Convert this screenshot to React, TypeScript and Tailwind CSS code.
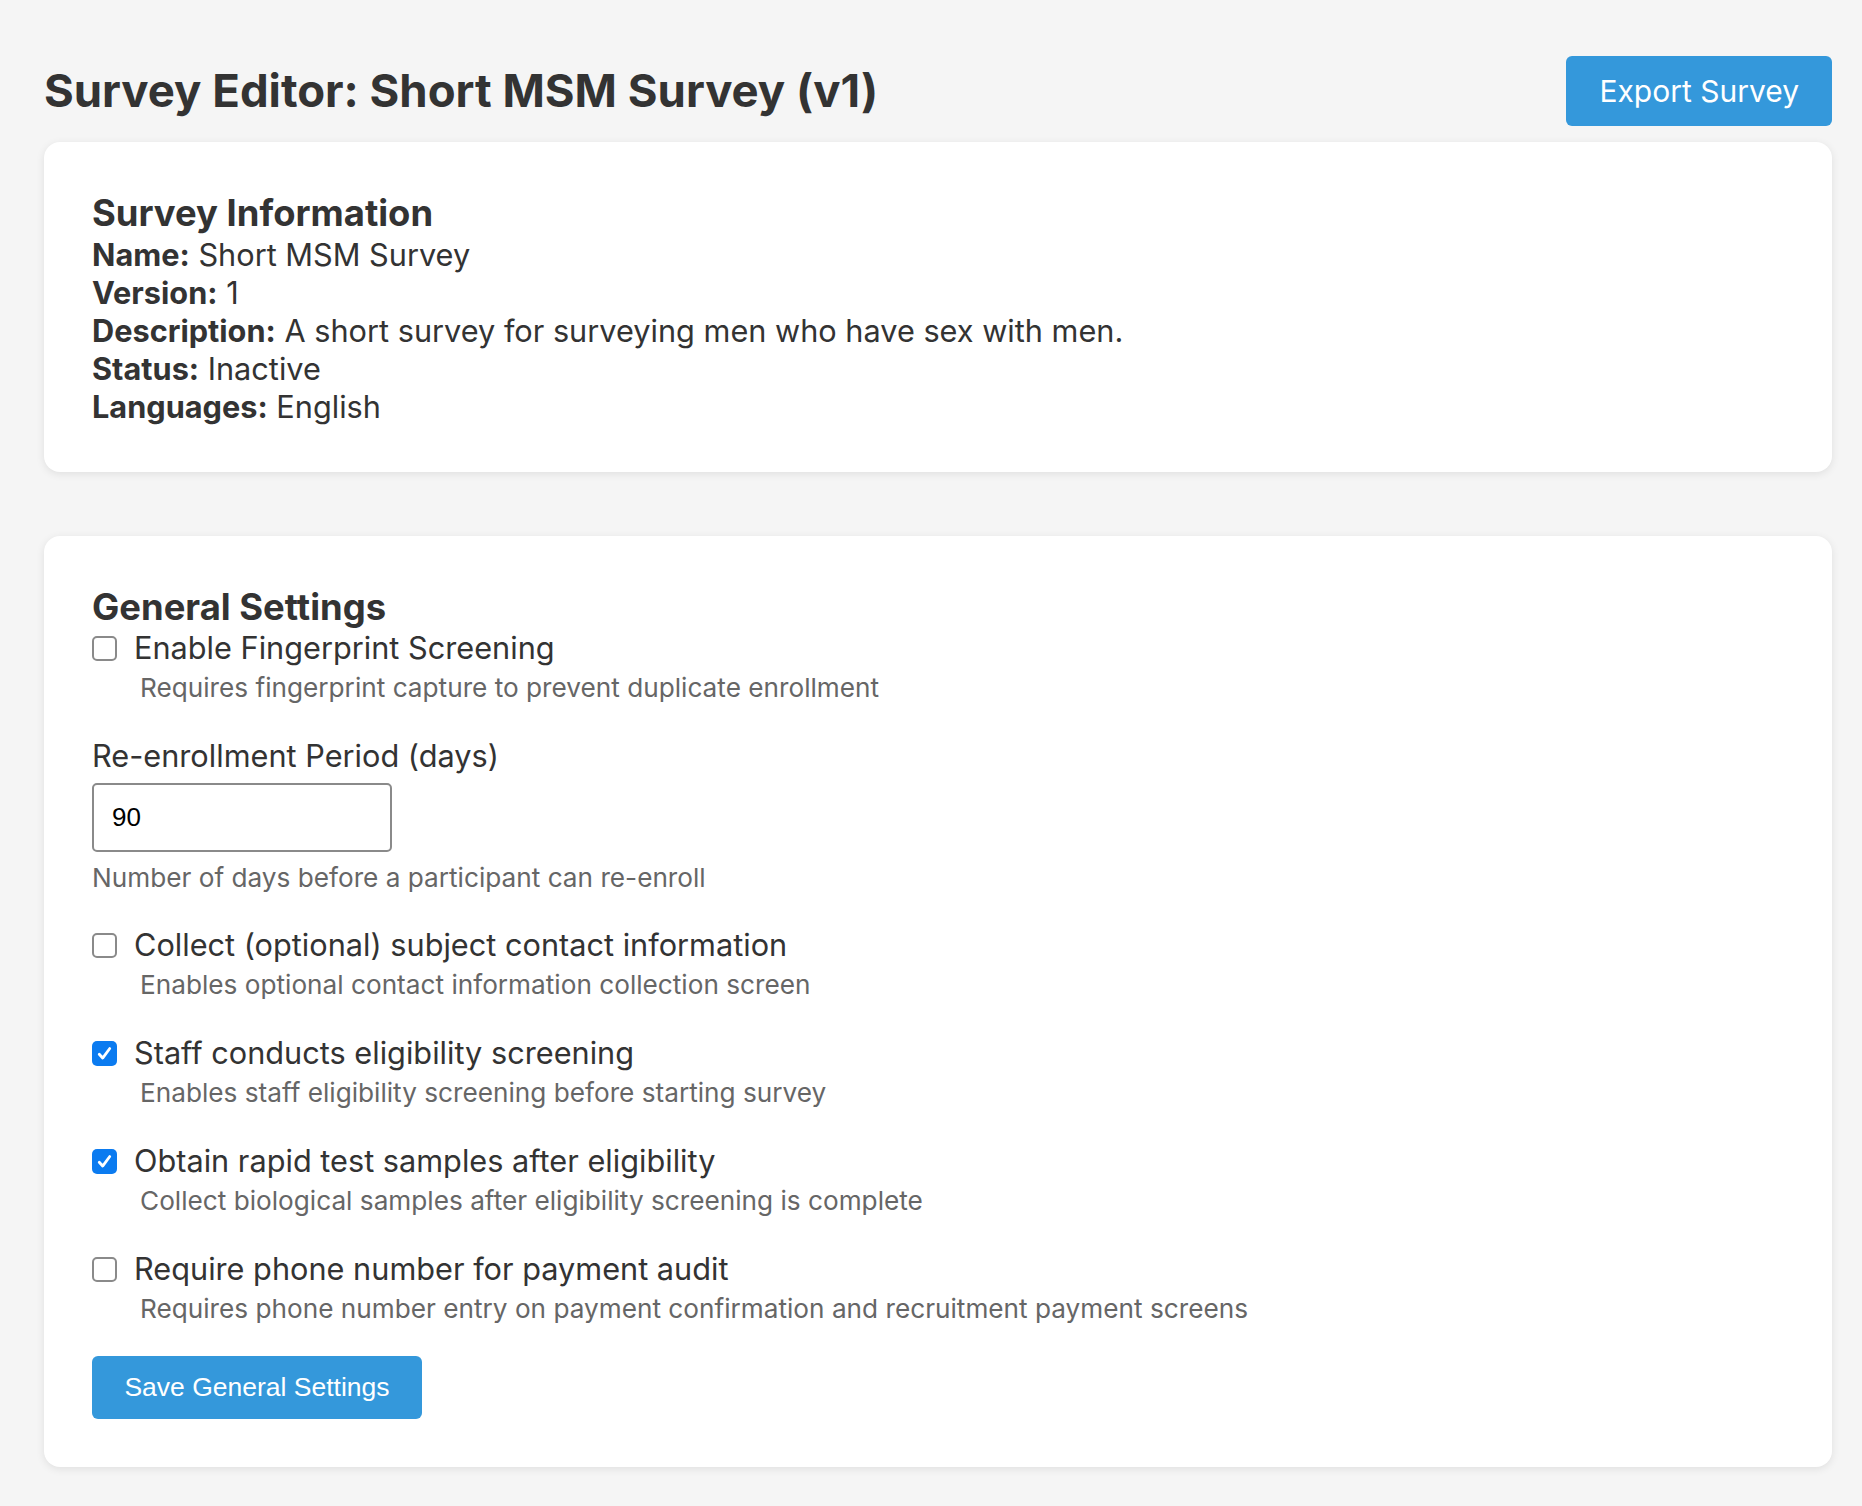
import { useState } from "react";

const sans = "font-['Inter','Noto_Sans',sans-serif]";

function Checkbox({ checked }: { checked: boolean }) {
  if (checked) {
    return (
      <span className="flex h-[25px] w-[25px] shrink-0 items-center justify-center rounded-[5px] bg-[#0b7bf0]">
        <svg viewBox="0 0 24 24" className="h-[21px] w-[21px]" fill="none">
          <path d="M6 12.8l3.9 4.4L18 6.3" stroke="#fff" strokeWidth="3.2" strokeLinecap="round" strokeLinejoin="round" />
        </svg>
      </span>
    );
  }
  return <span className="h-[25px] w-[25px] shrink-0 rounded-[5px] border-2 border-[#8a8a8a] bg-white" />;
}

interface SettingProps {
  label: string;
  hint: string;
  checked: boolean;
  className?: string;
}

function Setting({ label, hint, checked, className }: SettingProps) {
  return (
    <div className={className ?? "mb-[33px]"}>
      <label className="flex h-9 items-center gap-[17px] text-[30.7px] leading-9 text-[#333]">
        <Checkbox checked={checked} />
        <span>{label}</span>
      </label>
      <p className="mt-[5px] pl-[48px] text-[26.2px] leading-[34px] text-[#666]">{hint}</p>
    </div>
  );
}

function InfoRow({ name, value }: { name: string; value: string }) {
  return (
    <div className="text-[30.7px] leading-[38px] text-[#333]">
      <strong className="font-bold">{name}:</strong> {value}
    </div>
  );
}

export default function App() {
  const [days] = useState("90");

  return (
    <div className={`min-h-[1506px] bg-[#f5f5f5] pl-[44px] pr-[30px] pt-[56px] pb-[38px] ${sans}`}>
      <div className="mb-4 flex items-center justify-between">
        <h1 className="text-[45.5px] font-bold leading-[56px] text-[#333]">Survey Editor: Short MSM Survey (v1)</h1>
        <button className="h-[70px] rounded-md bg-[#3498db] px-[33px] text-[30px] text-white">Export Survey</button>
      </div>

      <section className="rounded-2xl bg-white px-12 pt-12 pb-[46px] shadow-[0_2px_8px_rgba(0,0,0,0.09)]">
        <h2 className="text-[36.4px] font-bold leading-[46px] text-[#333]">Survey Information</h2>
        <InfoRow name="Name" value="Short MSM Survey" />
        <InfoRow name="Version" value="1" />
        <InfoRow name="Description" value="A short survey for surveying men who have sex with men." />
        <InfoRow name="Status" value="Inactive" />
        <InfoRow name="Languages" value="English" />
      </section>

      <section className="mt-16 rounded-2xl bg-white px-12 pt-12 pb-12 shadow-[0_2px_8px_rgba(0,0,0,0.09)]">
        <h2 className="text-[36.4px] font-bold leading-[46px] text-[#333]">General Settings</h2>

        <Setting
          label="Enable Fingerprint Screening"
          hint="Requires fingerprint capture to prevent duplicate enrollment"
          checked={false}
        />

        <div className="mb-8">
          <label className="block text-[30.7px] leading-9 text-[#333]">Re-enrollment Period (days)</label>
          <input
            value={days}
            readOnly
            className="mt-[9px] block h-[69px] w-[300px] rounded-[5px] border-2 border-[#8a8a8a] px-[18px] font-['Liberation_Sans',Arial,sans-serif] text-[26px] text-black outline-none"
          />
          <p className="mt-[9px] text-[26.2px] leading-[34px] text-[#666]">Number of days before a participant can re-enroll</p>
        </div>

        <Setting
          label="Collect (optional) subject contact information"
          hint="Enables optional contact information collection screen"
          checked={false}
        />
        <Setting
          label="Staff conducts eligibility screening"
          hint="Enables staff eligibility screening before starting survey"
          checked
        />
        <Setting
          label="Obtain rapid test samples after eligibility"
          hint="Collect biological samples after eligibility screening is complete"
          checked
        />
        <Setting
          label="Require phone number for payment audit"
          hint="Requires phone number entry on payment confirmation and recruitment payment screens"
          checked={false}
          className="mb-[30px]"
        />

        <button className="h-[63px] w-[330px] rounded-md bg-[#3498db] font-['Liberation_Sans',Arial,sans-serif] text-[26.5px] text-white">
          Save General Settings
        </button>
      </section>
    </div>
  );
}
